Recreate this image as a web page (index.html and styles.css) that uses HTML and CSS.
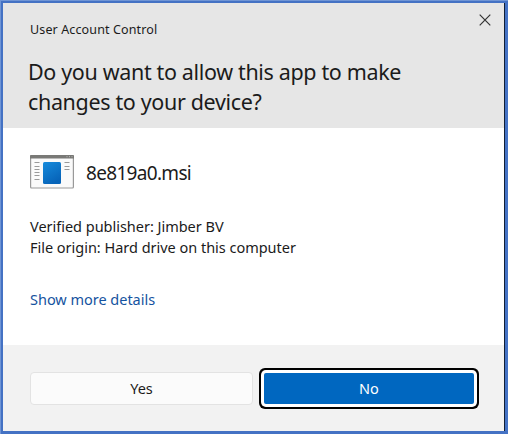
FILE: index.html
```html
<!DOCTYPE html>
<html lang="en">
<head>
<meta charset="utf-8">
<title>User Account Control</title>
<link rel="stylesheet" href="styles.css">
</head>
<body>
<main class="dialog">
  <header class="header">
    <div class="caption"><span>User Account Control</span></div>
    <h1 class="question"><span class="line-one">Do you want to allow this app to make</span><br><span class="line-two">changes to your device?</span></h1>
    <button class="close" aria-label="Close"><svg width="12" height="12" viewBox="0 0 12 12"><path d="M.7.7 11.3 11.3M11.3.7.7 11.3" fill="none" stroke="#333" stroke-width="1.2"/></svg></button>
  </header>
  <section class="content">
    <div class="program">
      <svg class="app-icon" width="44" height="34" viewBox="0 0 44 34">
        <defs><linearGradient id="blue" x1="0" y1="0" x2=".5" y2="1"><stop stop-color="#168bdc"/><stop offset="1" stop-color="#0764b9"/></linearGradient></defs>
        <rect x=".6" y=".6" width="42.8" height="32.4" rx="1" fill="#fafafa" stroke="#999" stroke-width="1.2"/>
        <path d="M0 3.4V1q0-1 1-1h42q1 0 1 1v2.4z" fill="#797976"/>
        <path d="M36.5 1.7h1M39 1.7h1M41.5 1.7h1" stroke="#bbb"/>
        <path d="M4.5 7.5h5M4.5 11.5h5M4.5 14.5h5M4.5 17.5h5M4.5 20.5h5M4.5 24.5h5M34.5 7.5h5M34.5 11.5h5M34.5 14.5h5" stroke="#999"/>
        <rect x="13" y="7" width="18" height="22" rx="1.5" fill="url(#blue)"/>
      </svg>
      <span class="filename">8e819a0.msi</span>
    </div>
    <p class="details"><span class="publisher">Verified publisher: Jimber BV</span><br><span class="origin">File origin: Hard drive on this computer</span></p>
    <a class="more">Show more details</a>
  </section>
  <footer class="actions">
    <button class="button">Yes</button>
    <button class="button primary">No</button>
  </footer>
</main>
</body>
</html>
```
FILE: styles.css
```css
* { box-sizing: border-box; }
body { margin: 0; font-family: "Noto Sans", sans-serif; color: #1b1b1b; }
.dialog {
  width: 508px; height: 434px;
  display: grid; grid-template-rows: 125px 217px 86px;
  border: 3px solid #4472c4;
  padding-right: 1px;
  background: #101e35;
  position: relative;
}
.dialog::before {
  content: ""; position: absolute; inset: -3px;
  border-top: 1px solid #7095d5; border-left: 1px solid #7095d5;
}
.header { position: relative; background: #e6e6e6; padding: 17px 25px 0; white-space: nowrap; }
.caption { font-size: 12.5px; line-height: 20px; padding-left: 2px; letter-spacing: .13px; }
.question { margin: 17px 0 0; font-size: 21.5px; font-weight: 400; line-height: 29.5px; letter-spacing: -.35px; }
.close { position: absolute; right: 13px; top: 11px; width: 12px; height: 12px; padding: 0; border: 0; background: none; display: flex; }
.content { background: #fff; padding: 27px 27px 0; white-space: nowrap; }
.program { display: flex; align-items: center; gap: 12px; height: 34px; }
.filename { font-size: 19px; letter-spacing: -.68px; padding-top: 2px; }
.details { margin: 27px 0 0; font-size: 14.5px; line-height: 21px; letter-spacing: -.02px; }
.more { display: block; margin-top: 31px; font-size: 14.5px; line-height: 21px; color: #1553a0; letter-spacing: -.02px; }
.actions { background: #f2f2f2; padding: 27px 27px 0; display: flex; gap: 11px; }
.button { width: 223px; height: 33px; padding: 0 0 2px; border: 1px solid #e3e3e3; border-radius: 4px; background: #fbfbfb; font: 14.5px "Noto Sans", sans-serif; color: #1b1b1b; }
.primary { width: 210px; height: 31px; margin-top: 1px; border: 0; border-radius: 2px; background: #0067c0; color: #fff; box-shadow: 0 0 0 3px #fff, 0 0 0 5px #000; }
```
